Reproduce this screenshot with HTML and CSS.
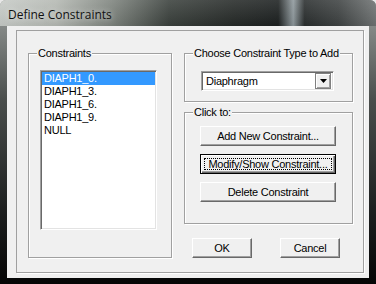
FILE: index.html
```html
<!DOCTYPE html>
<html lang="en">
<head>
    <meta charset="UTF-8">
    <meta name="viewport" content="width=device-width, initial-scale=1.0">
    <title>Define Constraints</title>
    <link rel="stylesheet" href="styles.css">
</head>
<body>
    <div class="window">
        <div class="titlebar">
            <span class="title">Define Constraints</span>
        </div>
        <div class="client">
            <div class="frame">
                <div class="group group-list">
                    <div class="group-label">Constraints</div>
                    <div class="listbox">
                        <div class="list-item selected">DIAPH1_0.</div>
                        <div class="list-item">DIAPH1_3.</div>
                        <div class="list-item">DIAPH1_6.</div>
                        <div class="list-item">DIAPH1_9.</div>
                        <div class="list-item">NULL</div>
                    </div>
                </div>

                <div class="side">
                    <div class="group group-type">
                        <div class="group-label">Choose Constraint Type to Add</div>
                        <div class="combo">
                            <span class="combo-text">Diaphragm</span>
                            <span class="combo-btn">
                                <svg width="7" height="4" viewBox="0 0 7 4"><path d="M0 0h7L3.5 4z" fill="#000"/></svg>
                            </span>
                        </div>
                    </div>

                    <div class="group group-actions">
                        <div class="group-label">Click to:</div>
                        <button class="btn btn-wide">Add New Constraint...</button>
                        <button class="btn btn-wide btn-default"><span class="focus-ring">Modify/Show Constraint...</span></button>
                        <button class="btn btn-wide">Delete Constraint</button>
                    </div>

                    <div class="dialog-buttons">
                        <button class="btn btn-small">OK</button>
                        <button class="btn btn-small">Cancel</button>
                    </div>
                </div>
            </div>
        </div>
    </div>
</body>
</html>
```

FILE: styles.css
```css
body {
    margin: 0;
    padding: 0;
    background-color: #e8e8e8;
    font-family: "Liberation Sans", Arial, sans-serif;
    font-size: 11px;
    letter-spacing: -0.25px;
    color: #000;
}
.window {
    width: 376px;
    height: 284px;
    display: flex;
    flex-direction: column;
    border-radius: 6px 6px 0 0;
    overflow: hidden;
    background: linear-gradient(to bottom, #9a9e9c 0, #4a4e4c 35%, #1c1e1e 75%, #050505 100%);
}
.titlebar {
    height: 26px;
    display: flex;
    align-items: center;
    padding-left: 8px;
    background:
        linear-gradient(to bottom, rgba(255, 255, 255, 0.12), rgba(0, 0, 0, 0.05)),
        linear-gradient(to right, #c6cac6 0%, #b4b8b2 15%, #7c827c 30%, #3a403c 45%, #262a28 62%, #1c2020 74%, #8e989c 78%, #2a2e2e 81%, #3e4242 90%, #6e7272 100%);
}
.title {
    font-family: "Open Sans", "Noto Sans", sans-serif;
    font-size: 12px;
    letter-spacing: 0;
    color: #111;
    text-shadow: 0 0 6px rgba(255, 255, 255, 0.8);
    margin-top: 3px;
}
.client {
    flex: 1;
    display: flex;
    margin: 0 7px 6px 7px;
    background-color: #f0f0f0;
}
.frame {
    flex: 1;
    display: flex;
    gap: 12px;
    margin: 4px 5px 5px 9px;
    padding: 22px 10px 14px 11px;
    border: 1px solid #a0a0a0;
    box-shadow: 1px 1px 0 #fff;
}
.group {
    box-sizing: border-box;
    border: 1px solid #a0a0a0;
    box-shadow: inset 1px 1px 0 #fff, 1px 1px 0 #fff;
}
.group-label {
    width: fit-content;
    height: 13px;
    line-height: 13px;
    margin: -7px 0 0 8px;
    padding: 0 1px;
    white-space: nowrap;
    background-color: #f0f0f0;
}
.group-list {
    width: 144px;
    height: 205px;
}
.listbox {
    box-sizing: border-box;
    width: 117px;
    height: 160px;
    margin: 10px 0 0 11px;
    padding: 1px;
    background-color: #fff;
    border: 1px solid;
    border-color: #a0a0a0 #fff #fff #a0a0a0;
    box-shadow: inset 1px 1px 0 #696969, inset -1px -1px 0 #e3e3e3;
}
.list-item {
    height: 13px;
    line-height: 13px;
    padding-left: 2px;
    white-space: nowrap;
}
.list-item.selected {
    background-color: #3399ff;
    color: #fff;
}
.side {
    width: 169px;
    display: flex;
    flex-direction: column;
}
.group-type {
    height: 49px;
}
.combo {
    box-sizing: border-box;
    width: 133px;
    height: 20px;
    margin: 11px 0 0 16px;
    display: flex;
    align-items: center;
    padding: 2px;
    background-color: #fff;
    border: 1px solid;
    border-color: #a0a0a0 #fff #fff #a0a0a0;
    box-shadow: inset 1px 1px 0 #696969, inset -1px -1px 0 #e3e3e3;
}
.combo-text {
    flex: 1;
    padding-left: 2px;
}
.combo-btn {
    box-sizing: border-box;
    width: 16px;
    height: 16px;
    display: flex;
    align-items: center;
    justify-content: center;
    background-color: #f0f0f0;
    border: 1px solid #808080;
    box-shadow: inset 1px 1px 0 #fff, inset -1px -1px 0 #a0a0a0;
}
.group-actions {
    height: 112px;
    margin-top: 10px;
    display: flex;
    flex-direction: column;
    align-items: flex-start;
}
.btn {
    box-sizing: border-box;
    height: 20px;
    padding: 0;
    font-family: "Liberation Sans", Arial, sans-serif;
    font-size: 11px;
    letter-spacing: -0.25px;
    color: #000;
    background-color: #f0f0f0;
    border: 1px solid;
    border-color: #fff #696969 #696969 #fff;
    box-shadow: inset -1px -1px 0 #a0a0a0;
}
.btn-wide {
    width: 136px;
    margin: 0 0 8px 15px;
}
.group-actions .btn-wide:first-of-type {
    margin-top: 7px;
}
.btn-default {
    border: 1px solid #000;
    box-shadow: inset 1px 1px 0 #fff, inset -1px -1px 0 #696969, inset -2px -2px 0 #a0a0a0;
    display: flex;
    padding: 3px;
}
.focus-ring {
    flex: 1;
    line-height: 10px;
    border: 1px dotted #000;
}
.dialog-buttons {
    display: flex;
    gap: 28px;
    margin-top: 14px;
    padding-left: 8px;
}
.btn-small {
    width: 60px;
}
```
